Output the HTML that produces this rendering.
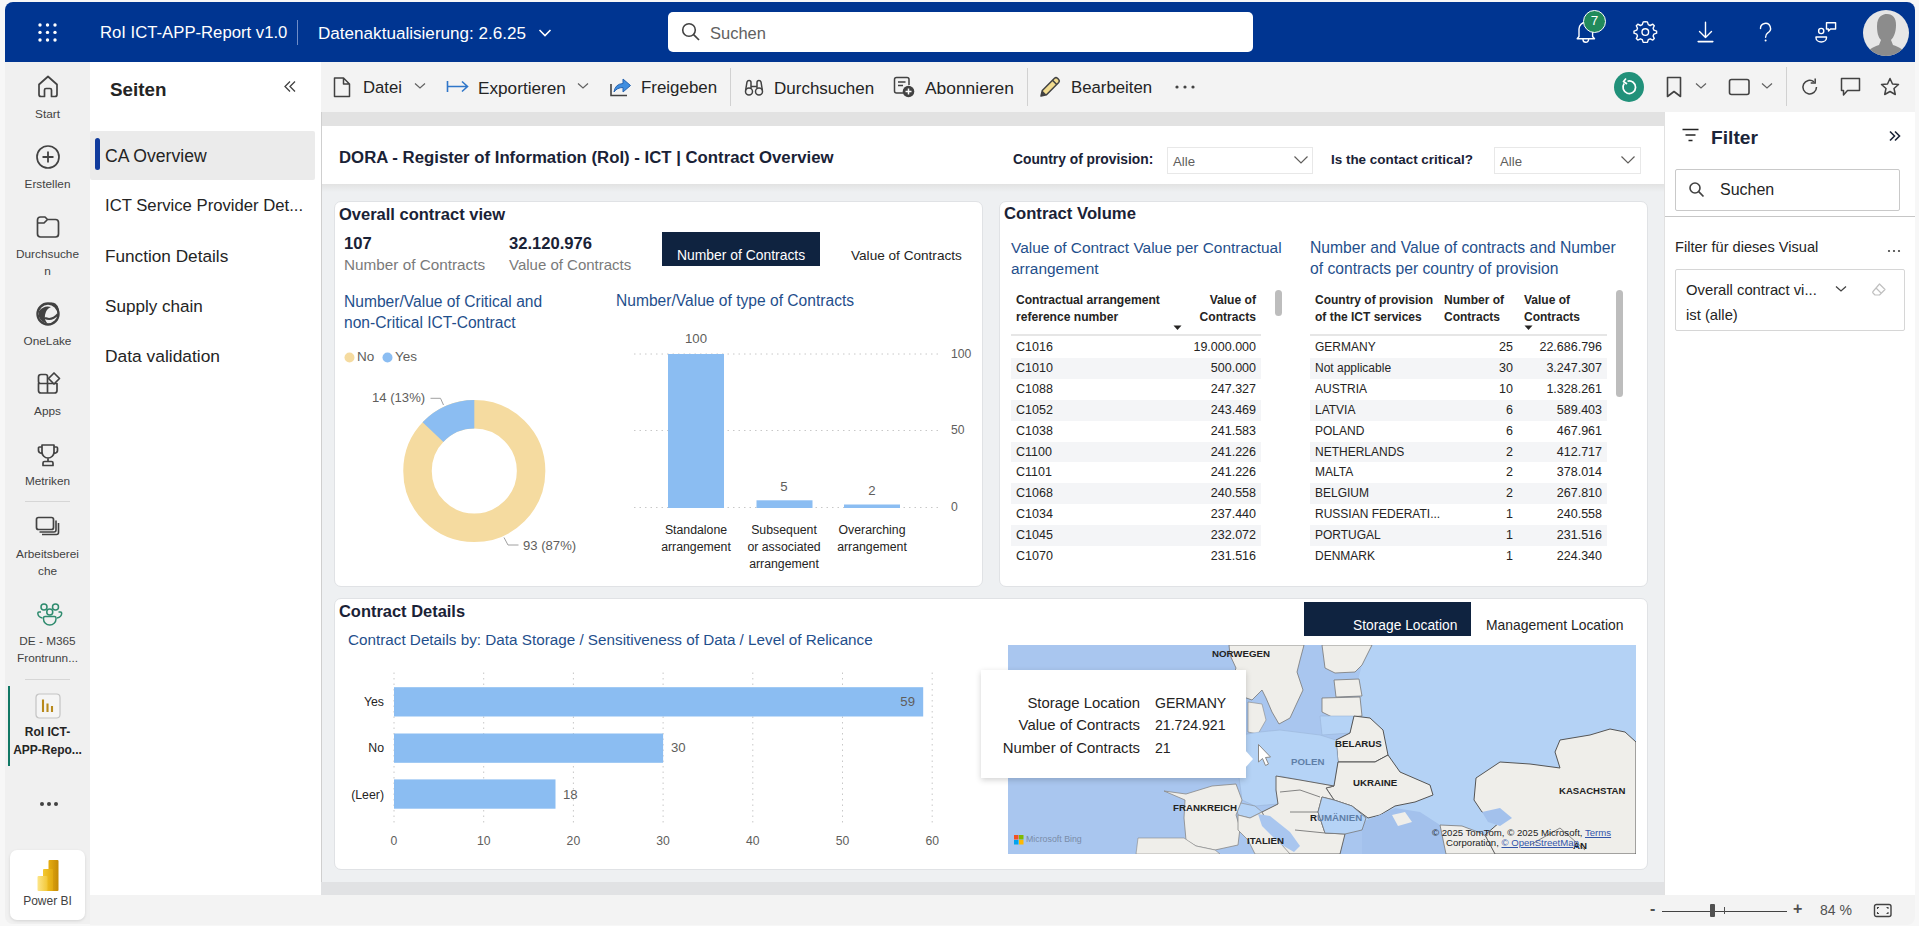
<!DOCTYPE html>
<html><head><meta charset="utf-8">
<style>
*{box-sizing:border-box;margin:0;padding:0}
html,body{width:1919px;height:926px;overflow:hidden;background:#f7f7f7;font-family:"Liberation Sans",sans-serif;color:#242424}
.a{position:absolute;white-space:nowrap}
#top{left:5px;top:2px;width:1910px;height:60px;background:#003591;border-radius:8px 8px 0 0}
#rail{left:5px;top:62px;width:85px;height:862px;background:#f0f0f0;border-radius:0 0 0 8px}
#pages{left:90px;top:62px;width:232px;height:833px;background:#fff;border-right:1px solid #cfcfcf}
#tool{left:321px;top:62px;width:1594px;height:50px;background:#f3f3f3}
#canvas{left:322px;top:112px;width:1342px;height:783px;background:#eef0f2}
#filter{left:1664px;top:112px;width:251px;height:783px;background:#fff;border-left:1px solid #e1e1e1}
#status{left:90px;top:895px;width:1825px;height:30px;background:#f3f3f3;border-radius:0 0 8px 0}
.card{position:absolute;background:#fff;border:1px solid #e0e2e5;border-radius:7px}
.t{position:absolute;white-space:nowrap;line-height:1}
</style></head><body>

<div id="top" class="a"></div>
 <svg class="a" style="left:38px;top:22px" width="30" height="30" viewBox="0 0 30 30" fill="#fff">
  <circle cx="2" cy="3" r="1.7"/><circle cx="9.5" cy="3" r="1.7"/><circle cx="17" cy="3" r="1.7"/>
  <circle cx="2" cy="10.4" r="1.7"/><circle cx="9.5" cy="10.4" r="1.7"/><circle cx="17" cy="10.4" r="1.7"/>
  <circle cx="2" cy="18" r="1.7"/><circle cx="9.5" cy="18" r="1.7"/><circle cx="17" cy="18" r="1.7"/>
 </svg>
 <div class="t" style="left:100px;top:25px;font-size:16.7px;color:#fff">RoI ICT-APP-Report v1.0</div>
 <div class="a" style="left:297px;top:20px;width:1px;height:25px;background:#6f8cc7"></div>
 <div class="t" style="left:318px;top:25px;font-size:17.1px;color:#fff">Datenaktualisierung: 2.6.25</div>
 <svg class="a" style="left:538px;top:28px" width="14" height="10" viewBox="0 0 14 10"><path d="M1.5 2 L7 7.5 L12.5 2" stroke="#fff" stroke-width="1.6" fill="none"/></svg>
 <div class="a" style="left:668px;top:12px;width:585px;height:40px;background:#fff;border-radius:5px"></div>
 <svg class="a" style="left:680px;top:21px" width="22" height="22" viewBox="0 0 22 22"><circle cx="9" cy="9" r="6.3" stroke="#424242" stroke-width="1.6" fill="none"/><path d="M13.6 13.6 L19 19" stroke="#424242" stroke-width="1.7"/></svg>
 <div class="t" style="left:710px;top:25px;font-size:16.5px;color:#616161">Suchen</div>
 <!-- bell -->
 <svg class="a" style="left:1560px;top:2px" width="300" height="60" viewBox="1560 2 300 60">
  <g stroke="#fff" fill="none" stroke-width="1.4" stroke-linejoin="round" stroke-linecap="round">
   <path d="M1579 36.5 L1579 29 A6.8 6.8 0 0 1 1592.6 29 L1592.6 36.5 L1594.5 38.8 L1577.2 38.8 Z"/>
   <path d="M1583 39.5 A2.8 2.8 0 0 0 1588.6 39.5"/>
   <path d="M1645.3 21.8 L1647.4 21.9 L1648.3 24.6 L1650.2 25.5 L1652.8 24.2 L1654.3 25.7 L1653.1 28.3 L1653.9 30.2 L1656.6 31.1 L1656.6 33.2 L1653.9 34.1 L1653.1 36 L1654.3 38.6 L1652.8 40.1 L1650.2 38.8 L1648.3 39.7 L1647.4 42.4 L1643.2 42.4 L1642.3 39.7 L1640.4 38.8 L1637.8 40.1 L1636.3 38.6 L1637.5 36 L1636.7 34.1 L1634 33.2 L1634 31.1 L1636.7 30.2 L1637.5 28.3 L1636.3 25.7 L1637.8 24.2 L1640.4 25.5 L1642.3 24.6 L1643.2 21.9 Z"/>
   <circle cx="1645.3" cy="32.1" r="3.3"/>
   <path d="M1705.5 22.3 L1705.5 37.5 M1699.5 31.5 L1705.5 37.5 L1711.5 31.5"/>
   <path d="M1698.2 41.6 L1712.8 41.6" stroke-width="1.6"/>
   <path d="M1760.5 28.5 A5 5 0 1 1 1767.8 32.8 C1766 34 1765.6 35 1765.6 37.2"/>
   <path d="M1816 37 L1826.5 37 L1826.5 37.8 A5.25 4.2 0 0 1 1816 37.8 Z"/>
   <circle cx="1821.2" cy="31" r="2.6"/>
   <path d="M1826.5 22.8 L1835.6 22.8 L1835.6 29 L1830.5 29 L1828.5 31 L1828.5 29 L1826.5 29 Z"/>
  </g>
  <circle cx="1765.6" cy="40.6" r="1" fill="#fff"/>
 </svg>
 <div class="a" style="left:1583px;top:10px;width:23px;height:23px;border-radius:50%;background:#218a5b;border:1.5px solid #fff;color:#fff;font-size:13.5px;line-height:20px;text-align:center">7</div>
 <!-- avatar -->
 <svg class="a" style="left:1863px;top:10px" width="46" height="46" viewBox="0 0 46 46">
  <defs><clipPath id="av"><circle cx="23" cy="23" r="23"/></clipPath></defs>
  <circle cx="23" cy="23" r="23" fill="#e6e6e6"/>
  <g clip-path="url(#av)" fill="#8c8c8c">
   <path d="M14 16 C14 6 20 4 24 4 C30 4 33 8 33 15 C33 22 31 27 28 30 L30 35 C36 37 42 40 44 46 L2 46 C4 40 10 37 16 35 L18 30 C15 27 14 22 14 16 Z"/>
  </g>
 </svg>
</div>

<div id="rail" class="a"></div>
<div class="a" style="left:5px;top:62px;width:85px;text-align:center;font-size:11.8px;color:#424242;line-height:17px">
 <svg class="a" style="left:31px;top:11px" width="24" height="26" viewBox="0 0 24 26"><path d="M3 11.5 L12 3.5 L21 11.5 L21 21.5 Q21 23.5 19 23.5 L15.5 23.5 L15.5 17 Q15.5 15.5 14 15.5 L10 15.5 Q8.5 15.5 8.5 17 L8.5 23.5 L5 23.5 Q3 23.5 3 21.5 Z" stroke="#424242" stroke-width="1.7" fill="none" stroke-linejoin="round"/></svg>
 <div class="a" style="left:0;top:44px;width:85px">Start</div>
 <svg class="a" style="left:30px;top:82px" width="26" height="26" viewBox="0 0 26 26"><circle cx="13" cy="13" r="11" stroke="#424242" stroke-width="1.7" fill="none"/><path d="M13 7.5 L13 18.5 M7.5 13 L18.5 13" stroke="#424242" stroke-width="1.8"/></svg>
 <div class="a" style="left:0;top:114px;width:85px">Erstellen</div>
 <svg class="a" style="left:30px;top:152px" width="26" height="26" viewBox="0 0 26 26"><path d="M2.5 6 Q2.5 3 5.5 3 L10 3 L12.5 5.5 L20.5 5.5 Q23.5 5.5 23.5 8.5 L23.5 20 Q23.5 23 20.5 23 L5.5 23 Q2.5 23 2.5 20 Z M2.5 9 L9 9 L12.5 5.5" stroke="#424242" stroke-width="1.7" fill="none" stroke-linejoin="round"/></svg>
 <div class="a" style="left:0;top:184px;width:85px;line-height:16.5px">Durchsuche<br>n</div>
 <svg class="a" style="left:30px;top:239px" width="26" height="26" viewBox="0 0 26 26"><circle cx="13" cy="13" r="10.5" stroke="#424242" stroke-width="2.4" fill="none"/><path d="M4 10 Q9 4 16 6 Q11 8 10 14 Q9 19 13 23 Q6 21 4 16 Z" fill="#424242"/><path d="M10 17 Q17 20 23 13" stroke="#424242" stroke-width="2" fill="none"/><path d="M14 3 Q21 1 23 9" stroke="#424242" stroke-width="2.2" fill="none"/></svg>
 <div class="a" style="left:0;top:271px;width:85px">OneLake</div>
 <svg class="a" style="left:31px;top:309px" width="26" height="26" viewBox="0 0 26 26"><path d="M2.5 6 Q2.5 3.5 5 3.5 L9.5 3.5 Q11.5 3.5 11.5 5.5 L11.5 12.5 L4.5 12.5 Q2.5 12.5 2.5 10.5 Z M2.5 12.5 L11.5 12.5 L11.5 22 L5 22 Q2.5 22 2.5 19.5 Z M11.5 12.5 L21 12.5 L21 19.5 Q21 22 18.5 22 L11.5 22 Z" stroke="#424242" stroke-width="1.7" fill="none" stroke-linejoin="round"/><path d="M18 2 L23.5 7.5 L18 13 L12.5 7.5 Z" stroke="#424242" stroke-width="1.7" fill="#f0f0f0" stroke-linejoin="round"/></svg>
 <div class="a" style="left:0;top:341px;width:85px">Apps</div>
 <svg class="a" style="left:31px;top:380px" width="24" height="26" viewBox="0 0 24 26"><path d="M6 3 L18 3 L18 10 A6 6 0 0 1 6 10 Z M6 5 L3.5 5 Q2.5 5 2.5 6 L2.5 8.5 Q2.5 11 6 11.5 M18 5 L20.5 5 Q21.5 5 21.5 6 L21.5 8.5 Q21.5 11 18 11.5 M12 16 L12 19 M7 23.5 L7 21 Q7 19.5 8.5 19.5 L15.5 19.5 Q17 19.5 17 21 L17 23.5 Z" stroke="#424242" stroke-width="1.7" fill="none" stroke-linejoin="round"/></svg>
 <div class="a" style="left:0;top:411px;width:85px">Metriken</div>
 <div class="a" style="left:20px;top:439px;width:45px;height:1px;background:#d6d6d6"></div>
 <svg class="a" style="left:30px;top:454px" width="28" height="22" viewBox="0 0 28 22"><rect x="1.5" y="1.5" width="17" height="12" rx="2" stroke="#424242" stroke-width="1.7" fill="none"/><path d="M21 4.5 L21 14 Q21 16 19 16 L4.5 16" stroke="#424242" stroke-width="1.6" fill="none"/><path d="M23.5 7 L23.5 16.5 Q23.5 18.5 21.5 18.5 L7 18.5" stroke="#424242" stroke-width="1.6" fill="none"/></svg>
 <div class="a" style="left:0;top:484px;width:85px;line-height:17px">Arbeitsberei<br>che</div>
 <svg class="a" style="left:31px;top:540px" width="28" height="26" viewBox="0 0 28 26"><circle cx="8" cy="5" r="3" stroke="#2e8b6e" stroke-width="1.5" fill="none"/><circle cx="19.5" cy="5" r="3" stroke="#2e8b6e" stroke-width="1.5" fill="none"/><circle cx="13.75" cy="10" r="3" stroke="#2e8b6e" stroke-width="1.5" fill="none"/><path d="M5 10 L3 10 Q1.8 10 1.8 11.2 Q2 15 6.5 16" stroke="#2e8b6e" stroke-width="1.5" fill="none"/><path d="M22.5 10 L24.5 10 Q25.7 10 25.7 11.2 Q25.5 15 21 16" stroke="#2e8b6e" stroke-width="1.5" fill="none"/><path d="M7.5 16 Q7.5 14.5 9 14.5 L18.5 14.5 Q20 14.5 20 16 L20 17 A6.25 6 0 0 1 7.5 17 Z" stroke="#2e8b6e" stroke-width="1.5" fill="none" stroke-linejoin="round"/></svg>
 <div class="a" style="left:0;top:571px;width:85px;line-height:17px">DE - M365<br>Frontrunn...</div>
 <div class="a" style="left:20px;top:617px;width:45px;height:1px;background:#d6d6d6"></div>
 <div class="a" style="left:2.5px;top:624px;width:2px;height:80px;background:#117865"></div>
 <svg class="a" style="left:30px;top:631px" width="26" height="26" viewBox="0 0 26 26"><rect x="1" y="1" width="24" height="24" rx="3.5" fill="#f5f5f5" stroke="#c4c4c4" stroke-width="1.2"/><path d="M8 6.5 L8 19 M12.5 10.5 L12.5 19 M17 13 L17 19" stroke="#b8891b" stroke-width="2.1"/></svg>
 <div class="a" style="left:0;top:661px;width:85px;line-height:18px;font-weight:bold;font-size:12px;color:#242424">RoI ICT-<br>APP-Repo...</div>
 <svg class="a" style="left:33px;top:737px" width="22" height="10" viewBox="0 0 22 10"><circle cx="4" cy="5" r="2" fill="#424242"/><circle cx="11" cy="5" r="2" fill="#424242"/><circle cx="18" cy="5" r="2" fill="#424242"/></svg>
 <div class="a" style="left:5px;top:788px;width:75px;height:70px;background:#fff;border-radius:7px;box-shadow:0 1px 3px rgba(0,0,0,0.12)"></div>
 <svg class="a" style="left:31px;top:796px" width="24" height="34" viewBox="0 0 24 34"><defs><linearGradient id="pb1" x1="0" x2="1"><stop offset="0" stop-color="#e6ad10"/><stop offset="1" stop-color="#c48a05"/></linearGradient><linearGradient id="pb2" x1="0" x2="1"><stop offset="0" stop-color="#f3c92f"/><stop offset="1" stop-color="#e2a90e"/></linearGradient><linearGradient id="pb3" x1="0" x2="1"><stop offset="0" stop-color="#fde68a"/><stop offset="1" stop-color="#f2c736"/></linearGradient></defs><rect x="12.5" y="2" width="10" height="31" rx="1" fill="url(#pb1)"/><rect x="7" y="11" width="10" height="22" rx="1" fill="url(#pb2)"/><rect x="1.5" y="18" width="10" height="15" rx="1" fill="url(#pb3)"/></svg>
 <div class="a" style="left:0;top:831px;width:85px;font-size:12px;color:#424242">Power BI</div>
</div>


<div id="pages" class="a"></div>
<div class="t" style="left:110px;top:81px;font-size:18.8px;font-weight:bold;color:#242424">Seiten</div>
<svg class="a" style="left:282px;top:79px" width="16" height="16" viewBox="0 0 16 16"><path d="M8 2.5 L3 7.5 L8 12.5 M13 2.5 L8 7.5 L13 12.5" stroke="#424242" stroke-width="1.3" fill="none"/></svg>
<div class="a" style="left:90px;top:131px;width:225px;height:49px;background:#ebebeb;border-radius:2px"></div>
<div class="a" style="left:95px;top:138px;width:5px;height:32px;background:#0f3a9c;border-radius:3px"></div>
<div class="t" style="left:105px;top:148px;font-size:17.6px;color:#242424">CA Overview</div>
<div class="t" style="left:105px;top:198px;font-size:16.7px;color:#242424">ICT Service Provider Det...</div>
<div class="t" style="left:105px;top:248px;font-size:17.2px;color:#242424">Function Details</div>
<div class="t" style="left:105px;top:298px;font-size:17.1px;color:#242424">Supply chain</div>
<div class="t" style="left:105px;top:348px;font-size:17.4px;color:#242424">Data validation</div>

<div id="tool" class="a"></div>
<!-- Datei -->
<svg class="a" style="left:332px;top:76px" width="20" height="22" viewBox="0 0 20 22"><path d="M2.5 2 L11.5 2 L17.5 8 L17.5 20.5 L2.5 20.5 Z M11.5 2 L11.5 8 L17.5 8" stroke="#424242" stroke-width="1.5" fill="none" stroke-linejoin="round"/></svg>
<div class="t" style="left:363px;top:80px;font-size:16.7px;color:#242424">Datei</div>
<svg class="a" style="left:414px;top:82px" width="12" height="8" viewBox="0 0 12 8"><path d="M1 1.5 L6 6 L11 1.5" stroke="#616161" stroke-width="1.2" fill="none"/></svg>
<!-- Exportieren -->
<svg class="a" style="left:446px;top:78px" width="24" height="18" viewBox="0 0 24 18"><path d="M1.5 3 L1.5 14 M2 8.5 L21.5 8.5 M16 3.5 L21.5 8.5 L16 13.5" stroke="#2f76c9" stroke-width="1.6" fill="none"/></svg>
<div class="t" style="left:478px;top:80px;font-size:17.2px;color:#242424">Exportieren</div>
<svg class="a" style="left:577px;top:82px" width="12" height="8" viewBox="0 0 12 8"><path d="M1 1.5 L6 6 L11 1.5" stroke="#616161" stroke-width="1.2" fill="none"/></svg>
<!-- Freigeben -->
<svg class="a" style="left:609px;top:76px" width="24" height="22" viewBox="0 0 24 22"><path d="M2 8 L2 19.5 L18 19.5" stroke="#424242" stroke-width="1.6" fill="none"/><path d="M5 16 Q6 8 14 7.5 L14 3 L21.5 9.5 L14 16 L14 11.5 Q8 11.5 5 16 Z" fill="#3f8ee0" stroke="#2563b0" stroke-width="1" stroke-linejoin="round"/></svg>
<div class="t" style="left:641px;top:80px;font-size:16.9px;color:#242424">Freigeben</div>
<div class="a" style="left:730px;top:68px;width:1px;height:38px;background:#d1d1d1"></div>
<!-- Durchsuchen -->
<svg class="a" style="left:744px;top:78px" width="20" height="19" viewBox="0 0 20 19"><circle cx="5" cy="13.5" r="3.5" stroke="#424242" stroke-width="1.5" fill="none"/><circle cx="15" cy="13.5" r="3.5" stroke="#424242" stroke-width="1.5" fill="none"/><path d="M1.6 12.5 L3 4 Q3.5 2.5 5 2.5 Q7 2.5 7 4.5 L7 10 M18.4 12.5 L17 4 Q16.5 2.5 15 2.5 Q13 2.5 13 4.5 L13 10 M7 8.5 L13 8.5" stroke="#424242" stroke-width="1.5" fill="none"/></svg>
<div class="t" style="left:774px;top:80px;font-size:17px;color:#242424">Durchsuchen</div>
<!-- Abonnieren -->
<svg class="a" style="left:892px;top:75px" width="24" height="24" viewBox="0 0 24 24"><path d="M11 18 L4.5 18 Q2.5 18 2.5 16 L2.5 4.5 Q2.5 2.5 4.5 2.5 L15 2.5 Q17 2.5 17 4.5 L17 10" stroke="#424242" stroke-width="1.5" fill="none"/><path d="M6 7 L13.5 7 M6 10.5 L11 10.5" stroke="#424242" stroke-width="1.5"/><circle cx="16.5" cy="16.5" r="5.8" fill="#424242"/><path d="M16.5 13.5 L16.5 19.5 M13.5 16.5 L19.5 16.5" stroke="#fff" stroke-width="1.5"/></svg>
<div class="t" style="left:925px;top:80px;font-size:17.4px;color:#242424">Abonnieren</div>
<div class="a" style="left:1027px;top:68px;width:1px;height:38px;background:#d1d1d1"></div>
<!-- Bearbeiten -->
<svg class="a" style="left:1038px;top:75px" width="24" height="24" viewBox="0 0 24 24"><path d="M3 21 L4.3 15.5 L16.5 3.3 Q18 2 19.5 3.3 L20.7 4.5 Q22 6 20.7 7.5 L8.5 19.7 Z" fill="#f2dc8f" stroke="#424242" stroke-width="1.5" stroke-linejoin="round"/><path d="M14.5 5.3 L18.7 9.5" stroke="#424242" stroke-width="1.5"/><path d="M3 21 L4.3 15.5 L8.5 19.7 Z" fill="#424242"/></svg>
<div class="t" style="left:1071px;top:80px;font-size:16.8px;color:#242424">Bearbeiten</div>
<svg class="a" style="left:1174px;top:83px" width="22" height="8" viewBox="0 0 22 8"><circle cx="3" cy="4" r="1.6" fill="#424242"/><circle cx="11" cy="4" r="1.6" fill="#424242"/><circle cx="19" cy="4" r="1.6" fill="#424242"/></svg>
<!-- right side -->
<div class="a" style="left:1614px;top:72px;width:30px;height:30px;border-radius:50%;background:#21917a"></div>
<svg class="a" style="left:1614px;top:72px" width="30" height="30" viewBox="0 0 30 30"><path d="M10.2 11.5 A6.3 6.3 0 1 0 13.5 9.2" stroke="#fff" stroke-width="1.7" fill="none"/><path d="M12 6.5 L9.5 9.5 L13 12" stroke="#fff" stroke-width="1.7" fill="none" stroke-linejoin="round"/></svg>
<svg class="a" style="left:1666px;top:76px" width="16" height="22" viewBox="0 0 16 22"><path d="M1.5 1.5 L14.5 1.5 L14.5 20.5 L8 15.5 L1.5 20.5 Z" stroke="#424242" stroke-width="1.6" fill="none" stroke-linejoin="round"/></svg>
<svg class="a" style="left:1695px;top:82px" width="12" height="8" viewBox="0 0 12 8"><path d="M1 1.5 L6 6 L11 1.5" stroke="#616161" stroke-width="1.2" fill="none"/></svg>
<svg class="a" style="left:1728px;top:78px" width="23" height="18" viewBox="0 0 23 18"><rect x="1.5" y="1.5" width="19.5" height="15" rx="2" stroke="#424242" stroke-width="1.6" fill="none"/></svg>
<svg class="a" style="left:1761px;top:82px" width="12" height="8" viewBox="0 0 12 8"><path d="M1 1.5 L6 6 L11 1.5" stroke="#616161" stroke-width="1.2" fill="none"/></svg>
<div class="a" style="left:1786px;top:67px;width:1px;height:39px;background:#d1d1d1"></div>
<svg class="a" style="left:1800px;top:77px" width="20" height="20" viewBox="0 0 20 20"><path d="M16.5 10 A6.8 6.8 0 1 1 14 4.8" stroke="#424242" stroke-width="1.5" fill="none"/><path d="M15.2 1.5 L15.2 6 L10.7 6" stroke="#424242" stroke-width="1.5" fill="none"/></svg>
<svg class="a" style="left:1840px;top:77px" width="21" height="20" viewBox="0 0 21 20"><path d="M1.5 1.5 L19.5 1.5 L19.5 13.5 L7.5 13.5 L3.5 18 L3.5 13.5 L1.5 13.5 Z" stroke="#424242" stroke-width="1.5" fill="none" stroke-linejoin="round"/></svg>
<svg class="a" style="left:1880px;top:77px" width="20" height="19" viewBox="0 0 20 19"><path d="M10 1.5 L12.5 7 L18.5 7.5 L14 11.5 L15.3 17.5 L10 14.5 L4.7 17.5 L6 11.5 L1.5 7.5 L7.5 7 Z" stroke="#424242" stroke-width="1.5" fill="none" stroke-linejoin="round"/></svg>

<div id="canvas" class="a"></div>
<div class="a" style="left:322px;top:112px;width:1342px;height:14px;background:#e2e2e2"></div>
<div class="a" style="left:322px;top:184px;width:1342px;height:8px;background:linear-gradient(#e2e2e2,#eef0f2)"></div><div class="a" style="left:322px;top:126px;width:1342px;height:58px;background:#fff"></div>

<!-- HEADER -->
<div class="t" style="left:339px;top:150px;font-size:16.75px;font-weight:bold;color:#1a2236">DORA - Register of Information (RoI) - ICT | Contract Overview</div>
<div class="t" style="left:1013px;top:153px;font-size:13.8px;font-weight:bold;color:#1a2236">Country of provision:</div>
<div class="a" style="left:1167px;top:147px;width:146px;height:27px;border:1px solid #e8e8e8;background:#fff"></div>
<div class="t" style="left:1173px;top:155px;font-size:13.2px;color:#605e5c">Alle</div>
<svg class="a" style="left:1293px;top:154px" width="16" height="12" viewBox="0 0 16 12"><path d="M1.5 2.5 L8 9 L14.5 2.5" stroke="#605e5c" stroke-width="1.2" fill="none"/></svg>
<div class="t" style="left:1331px;top:153px;font-size:13.45px;font-weight:bold;color:#1a2236">Is the contact critical?</div>
<div class="a" style="left:1494px;top:147px;width:147px;height:27px;border:1px solid #e8e8e8;background:#fff"></div>
<div class="t" style="left:1500px;top:155px;font-size:13.2px;color:#605e5c">Alle</div>
<svg class="a" style="left:1620px;top:154px" width="16" height="12" viewBox="0 0 16 12"><path d="M1.5 2.5 L8 9 L14.5 2.5" stroke="#605e5c" stroke-width="1.2" fill="none"/></svg>

<!-- CARD 1 -->
<div class="card" style="left:334px;top:201px;width:649px;height:386px"></div>
<div class="t" style="left:339px;top:206px;font-size:16.5px;font-weight:bold;color:#1a2236">Overall contract view</div>
<div class="t" style="left:344px;top:236px;font-size:16.6px;font-weight:bold;color:#1a2236">107</div>
<div class="t" style="left:344px;top:257px;font-size:15.3px;color:#7a7a7a">Number of Contracts</div>
<div class="t" style="left:509px;top:236px;font-size:16.6px;font-weight:bold;color:#1a2236">32.120.976</div>
<div class="t" style="left:509px;top:257px;font-size:15px;color:#7a7a7a">Value of Contracts</div>
<div class="a" style="left:662px;top:232px;width:158px;height:34px;background:#0f2340"></div>
<div class="t" style="left:677px;top:249px;font-size:13.9px;color:#fff">Number of Contracts</div>
<div class="t" style="left:851px;top:249px;font-size:13.6px;color:#252423">Value of Contracts</div>
<div class="t" style="left:344px;top:291px;font-size:15.6px;color:#1f4f8c;line-height:21px">Number/Value of Critical and<br>non-Critical ICT-Contract</div>
<svg class="a" style="left:343px;top:351px" width="14" height="14"><circle cx="6.5" cy="6.5" r="5" fill="#f5dba0"/></svg>
<div class="t" style="left:357px;top:350px;font-size:13.5px;color:#605e5c">No</div>
<svg class="a" style="left:381px;top:351px" width="14" height="14"><circle cx="6.5" cy="6.5" r="5" fill="#8bbdf2"/></svg>
<div class="t" style="left:395px;top:350px;font-size:13.5px;color:#605e5c">Yes</div>
<svg class="a" style="left:334px;top:380px" width="260" height="180" viewBox="334 380 260 180">
 <circle cx="474.3" cy="471" r="56.8" stroke="#f5dba0" stroke-width="28.5" fill="none"/>
 <path d="M474.3 400 A71 71 0 0 0 422.6 422.3 L443.4 441.9 A42.5 42.5 0 0 1 474.3 428.5 Z" fill="#8bbdf2"/>
 <path d="M430.5 398.3 L440.5 398.3 L443.5 405" stroke="#a0a0a0" stroke-width="1" fill="none"/>
 <path d="M504 537.5 L508 545 L518.5 545" stroke="#a0a0a0" stroke-width="1" fill="none"/>
</svg>
<div class="t" style="left:372px;top:391px;font-size:13.1px;color:#605e5c">14 (13%)</div>
<div class="t" style="left:523px;top:539px;font-size:13.1px;color:#605e5c">93 (87%)</div>
<div class="t" style="left:616px;top:293px;font-size:15.6px;color:#1f4f8c">Number/Value of type of Contracts</div>
<svg class="a" style="left:630px;top:340px" width="350" height="180" viewBox="630 340 350 180">
 <g stroke="#c8c8c8" stroke-width="1" stroke-dasharray="1.5 4">
  <path d="M634 354 L942 354"/><path d="M634 430.5 L942 430.5"/><path d="M634 507.5 L942 507.5"/>
 </g>
 <rect x="668" y="354" width="56" height="154" fill="#8bbdf2"/>
 <rect x="756.5" y="500.3" width="56" height="7.7" fill="#8bbdf2"/>
 <rect x="844" y="504.5" width="56" height="3.5" fill="#8bbdf2"/>
</svg>
<div class="t" style="left:951px;top:348px;font-size:12.2px;color:#605e5c">100</div>
<div class="t" style="left:951px;top:424px;font-size:12.2px;color:#605e5c">50</div>
<div class="t" style="left:951px;top:501px;font-size:12.2px;color:#605e5c">0</div>
<div class="t" style="left:646px;top:332px;width:100px;text-align:center;font-size:13.2px;color:#605e5c">100</div>
<div class="t" style="left:734px;top:480px;width:100px;text-align:center;font-size:13.2px;color:#605e5c">5</div>
<div class="t" style="left:822px;top:484px;width:100px;text-align:center;font-size:13.2px;color:#605e5c">2</div>
<div class="t" style="left:646px;top:522px;width:100px;text-align:center;font-size:12.3px;line-height:17px;color:#252423">Standalone<br>arrangement</div>
<div class="t" style="left:734px;top:522px;width:100px;text-align:center;font-size:12.3px;line-height:17px;color:#252423">Subsequent<br>or associated<br>arrangement</div>
<div class="t" style="left:822px;top:522px;width:100px;text-align:center;font-size:12.3px;line-height:17px;color:#252423">Overarching<br>arrangement</div>

<!-- CARD 2 -->
<div class="card" style="left:999px;top:201px;width:649px;height:386px"></div>
<div class="t" style="left:1004px;top:206px;font-size:16.65px;font-weight:bold;color:#1a2236">Contract Volume</div>
<div class="t" style="left:1011px;top:237px;font-size:15.45px;color:#1f4f8c;line-height:21px">Value of Contract Value per Contractual<br>arrangement</div>
<div class="t" style="left:1310px;top:237px;font-size:15.7px;color:#1f4f8c;line-height:21px">Number and Value of contracts and Number<br>of contracts per country of provision</div>
<div class="t" style="left:1016px;top:292px;font-size:12.1px;font-weight:bold;color:#252423;line-height:17px">Contractual arrangement<br>reference number</div>
<div class="t" style="left:1155px;top:292px;width:101px;text-align:right;font-size:12.1px;font-weight:bold;color:#252423;line-height:17px">Value of<br>Contracts</div>
<svg class="a" style="left:1173px;top:325px" width="9" height="6"><path d="M0.5 0.5 L8.5 0.5 L4.5 5 Z" fill="#252423"/></svg>
<div class="a" style="left:1011px;top:334px;width:250px;height:2px;background:#e6e6e6"></div>
<div class="a" style="left:1275px;top:290px;width:7px;height:26px;background:#bdbdbd;border-radius:4px"></div>
<div class="t" style="left:1315px;top:292px;font-size:12px;font-weight:bold;color:#252423;line-height:17px">Country of provision<br>of the ICT services</div>
<div class="t" style="left:1444px;top:292px;font-size:12px;font-weight:bold;color:#252423;line-height:17px">Number of<br>Contracts</div>
<div class="t" style="left:1524px;top:292px;font-size:12px;font-weight:bold;color:#252423;line-height:17px">Value of<br>Contracts</div>
<svg class="a" style="left:1524px;top:325px" width="9" height="6"><path d="M0.5 0.5 L8.5 0.5 L4.5 5 Z" fill="#252423"/></svg>
<div class="a" style="left:1310px;top:334px;width:297px;height:2px;background:#e6e6e6"></div>
<div class="a" style="left:1616px;top:290px;width:7px;height:107px;background:#bdbdbd;border-radius:4px"></div>
<div class="a" style="left:1011px;top:357.9px;width:250px;height:20.9px;background:#f4f5f7"></div>
<div class="a" style="left:1310px;top:357.9px;width:297px;height:20.9px;background:#f4f5f7"></div>
<div class="a" style="left:1011px;top:399.7px;width:250px;height:20.9px;background:#f4f5f7"></div>
<div class="a" style="left:1310px;top:399.7px;width:297px;height:20.9px;background:#f4f5f7"></div>
<div class="a" style="left:1011px;top:441.5px;width:250px;height:20.9px;background:#f4f5f7"></div>
<div class="a" style="left:1310px;top:441.5px;width:297px;height:20.9px;background:#f4f5f7"></div>
<div class="a" style="left:1011px;top:483.3px;width:250px;height:20.9px;background:#f4f5f7"></div>
<div class="a" style="left:1310px;top:483.3px;width:297px;height:20.9px;background:#f4f5f7"></div>
<div class="a" style="left:1011px;top:525.1px;width:250px;height:20.9px;background:#f4f5f7"></div>
<div class="a" style="left:1310px;top:525.1px;width:297px;height:20.9px;background:#f4f5f7"></div>
<div class="t" style="left:1016px;top:341.0px;font-size:12.5px;color:#252423">C1016</div>
<div class="t" style="left:1156px;top:341.0px;width:100px;text-align:right;font-size:12.5px;color:#252423">19.000.000</div>
<div class="t" style="left:1016px;top:361.9px;font-size:12.5px;color:#252423">C1010</div>
<div class="t" style="left:1156px;top:361.9px;width:100px;text-align:right;font-size:12.5px;color:#252423">500.000</div>
<div class="t" style="left:1016px;top:382.8px;font-size:12.5px;color:#252423">C1088</div>
<div class="t" style="left:1156px;top:382.8px;width:100px;text-align:right;font-size:12.5px;color:#252423">247.327</div>
<div class="t" style="left:1016px;top:403.7px;font-size:12.5px;color:#252423">C1052</div>
<div class="t" style="left:1156px;top:403.7px;width:100px;text-align:right;font-size:12.5px;color:#252423">243.469</div>
<div class="t" style="left:1016px;top:424.6px;font-size:12.5px;color:#252423">C1038</div>
<div class="t" style="left:1156px;top:424.6px;width:100px;text-align:right;font-size:12.5px;color:#252423">241.583</div>
<div class="t" style="left:1016px;top:445.5px;font-size:12.5px;color:#252423">C1100</div>
<div class="t" style="left:1156px;top:445.5px;width:100px;text-align:right;font-size:12.5px;color:#252423">241.226</div>
<div class="t" style="left:1016px;top:466.4px;font-size:12.5px;color:#252423">C1101</div>
<div class="t" style="left:1156px;top:466.4px;width:100px;text-align:right;font-size:12.5px;color:#252423">241.226</div>
<div class="t" style="left:1016px;top:487.3px;font-size:12.5px;color:#252423">C1068</div>
<div class="t" style="left:1156px;top:487.3px;width:100px;text-align:right;font-size:12.5px;color:#252423">240.558</div>
<div class="t" style="left:1016px;top:508.2px;font-size:12.5px;color:#252423">C1034</div>
<div class="t" style="left:1156px;top:508.2px;width:100px;text-align:right;font-size:12.5px;color:#252423">237.440</div>
<div class="t" style="left:1016px;top:529.1px;font-size:12.5px;color:#252423">C1045</div>
<div class="t" style="left:1156px;top:529.1px;width:100px;text-align:right;font-size:12.5px;color:#252423">232.072</div>
<div class="t" style="left:1016px;top:550.0px;font-size:12.5px;color:#252423">C1070</div>
<div class="t" style="left:1156px;top:550.0px;width:100px;text-align:right;font-size:12.5px;color:#252423">231.516</div>
<div class="t" style="left:1315px;top:341.0px;font-size:12px;color:#252423">GERMANY</div>
<div class="t" style="left:1463px;top:341.0px;width:50px;text-align:right;font-size:12.5px;color:#252423">25</div>
<div class="t" style="left:1502px;top:341.0px;width:100px;text-align:right;font-size:12.5px;color:#252423">22.686.796</div>
<div class="t" style="left:1315px;top:361.9px;font-size:12px;color:#252423">Not applicable</div>
<div class="t" style="left:1463px;top:361.9px;width:50px;text-align:right;font-size:12.5px;color:#252423">30</div>
<div class="t" style="left:1502px;top:361.9px;width:100px;text-align:right;font-size:12.5px;color:#252423">3.247.307</div>
<div class="t" style="left:1315px;top:382.8px;font-size:12px;color:#252423">AUSTRIA</div>
<div class="t" style="left:1463px;top:382.8px;width:50px;text-align:right;font-size:12.5px;color:#252423">10</div>
<div class="t" style="left:1502px;top:382.8px;width:100px;text-align:right;font-size:12.5px;color:#252423">1.328.261</div>
<div class="t" style="left:1315px;top:403.7px;font-size:12px;color:#252423">LATVIA</div>
<div class="t" style="left:1463px;top:403.7px;width:50px;text-align:right;font-size:12.5px;color:#252423">6</div>
<div class="t" style="left:1502px;top:403.7px;width:100px;text-align:right;font-size:12.5px;color:#252423">589.403</div>
<div class="t" style="left:1315px;top:424.6px;font-size:12px;color:#252423">POLAND</div>
<div class="t" style="left:1463px;top:424.6px;width:50px;text-align:right;font-size:12.5px;color:#252423">6</div>
<div class="t" style="left:1502px;top:424.6px;width:100px;text-align:right;font-size:12.5px;color:#252423">467.961</div>
<div class="t" style="left:1315px;top:445.5px;font-size:12px;color:#252423">NETHERLANDS</div>
<div class="t" style="left:1463px;top:445.5px;width:50px;text-align:right;font-size:12.5px;color:#252423">2</div>
<div class="t" style="left:1502px;top:445.5px;width:100px;text-align:right;font-size:12.5px;color:#252423">412.717</div>
<div class="t" style="left:1315px;top:466.4px;font-size:12px;color:#252423">MALTA</div>
<div class="t" style="left:1463px;top:466.4px;width:50px;text-align:right;font-size:12.5px;color:#252423">2</div>
<div class="t" style="left:1502px;top:466.4px;width:100px;text-align:right;font-size:12.5px;color:#252423">378.014</div>
<div class="t" style="left:1315px;top:487.3px;font-size:12px;color:#252423">BELGIUM</div>
<div class="t" style="left:1463px;top:487.3px;width:50px;text-align:right;font-size:12.5px;color:#252423">2</div>
<div class="t" style="left:1502px;top:487.3px;width:100px;text-align:right;font-size:12.5px;color:#252423">267.810</div>
<div class="t" style="left:1315px;top:508.2px;font-size:12px;color:#252423">RUSSIAN FEDERATI...</div>
<div class="t" style="left:1463px;top:508.2px;width:50px;text-align:right;font-size:12.5px;color:#252423">1</div>
<div class="t" style="left:1502px;top:508.2px;width:100px;text-align:right;font-size:12.5px;color:#252423">240.558</div>
<div class="t" style="left:1315px;top:529.1px;font-size:12px;color:#252423">PORTUGAL</div>
<div class="t" style="left:1463px;top:529.1px;width:50px;text-align:right;font-size:12.5px;color:#252423">1</div>
<div class="t" style="left:1502px;top:529.1px;width:100px;text-align:right;font-size:12.5px;color:#252423">231.516</div>
<div class="t" style="left:1315px;top:550.0px;font-size:12px;color:#252423">DENMARK</div>
<div class="t" style="left:1463px;top:550.0px;width:50px;text-align:right;font-size:12.5px;color:#252423">1</div>
<div class="t" style="left:1502px;top:550.0px;width:100px;text-align:right;font-size:12.5px;color:#252423">224.340</div>
<!-- CARD 3 -->
<div class="card" style="left:334px;top:598px;width:1314px;height:272px"></div>
<div class="t" style="left:339px;top:603px;font-size:16.45px;font-weight:bold;color:#1a2236">Contract Details</div>
<div class="t" style="left:348px;top:632px;font-size:15.25px;color:#1f4f8c">Contract Details by: Data Storage / Sensitiveness of Data / Level of Relicance</div>
<svg class="a" style="left:380px;top:665px" width="570" height="165" viewBox="380 665 570 165">
 <g stroke="#c8c8c8" stroke-width="1" stroke-dasharray="1.5 4">
  <path d="M394 672.5 L394 823"/><path d="M483.7 672.5 L483.7 823"/><path d="M573.4 672.5 L573.4 823"/><path d="M663.1 672.5 L663.1 823"/><path d="M752.8 672.5 L752.8 823"/><path d="M842.5 672.5 L842.5 823"/><path d="M932.2 672.5 L932.2 823"/>
 </g>
 <rect x="394" y="687.2" width="529.2" height="29.3" fill="#8bbdf2"/>
 <rect x="394" y="733.5" width="269.1" height="29.3" fill="#8bbdf2"/>
 <rect x="394" y="779.4" width="161.5" height="29.3" fill="#8bbdf2"/>
</svg>
<div class="t" style="left:300px;top:696px;width:84px;text-align:right;font-size:12.3px;color:#252423">Yes</div>
<div class="t" style="left:300px;top:742px;width:84px;text-align:right;font-size:12.3px;color:#252423">No</div>
<div class="t" style="left:300px;top:789px;width:84px;text-align:right;font-size:12.3px;color:#252423">(Leer)</div>
<div class="t" style="left:880px;top:695px;width:35px;text-align:right;font-size:13.2px;color:#605e5c">59</div>
<div class="t" style="left:671px;top:741px;font-size:13.2px;color:#605e5c">30</div>
<div class="t" style="left:563px;top:788px;font-size:13.2px;color:#605e5c">18</div>
<div class="t" style="left:369px;top:835px;width:50px;text-align:center;font-size:12.2px;color:#605e5c">0</div>
<div class="t" style="left:458.7px;top:835px;width:50px;text-align:center;font-size:12.2px;color:#605e5c">10</div>
<div class="t" style="left:548.4px;top:835px;width:50px;text-align:center;font-size:12.2px;color:#605e5c">20</div>
<div class="t" style="left:638.1px;top:835px;width:50px;text-align:center;font-size:12.2px;color:#605e5c">30</div>
<div class="t" style="left:727.8px;top:835px;width:50px;text-align:center;font-size:12.2px;color:#605e5c">40</div>
<div class="t" style="left:817.5px;top:835px;width:50px;text-align:center;font-size:12.2px;color:#605e5c">50</div>
<div class="t" style="left:907.2px;top:835px;width:50px;text-align:center;font-size:12.2px;color:#605e5c">60</div>

<div class="a" style="left:1304px;top:602px;width:167px;height:34px;background:#0f2340"></div>
<div class="t" style="left:1353px;top:619px;font-size:13.8px;color:#fff">Storage Location</div>
<div class="t" style="left:1486px;top:619px;font-size:13.9px;color:#252423">Management Location</div>

<!-- MAP -->
<svg class="a" style="left:1008px;top:645px" width="628" height="209" viewBox="1008 645 628 209">
 <defs><clipPath id="mc"><rect x="1008" y="645" width="628" height="209"/></clipPath></defs>
 <g clip-path="url(#mc)" stroke-linejoin="round">
 <rect x="1008" y="645" width="628" height="209" fill="#a9c6ef"/>
 <!-- Russia data blue -->
 <path d="M1372 645 L1636 645 L1636 854 L1362 854 L1362 715 L1358 680 L1362 665 Z" fill="#b4d2f5"/>
 <!-- Norway + Sweden -->
 <path d="M1229 645 L1304 645 L1300 660 L1297 672 L1303 690 L1296 705 L1290 718 L1279 724 L1272 712 L1266 698 L1262 690 L1252 700 L1238 695 L1232 680 L1236 668 L1230 655 Z" fill="#efeeea" stroke="#777" stroke-width="0.8"/>
 <!-- Finland -->
 <path d="M1322 645 L1372 645 L1362 665 L1355 672 L1335 673 L1325 668 Z" fill="#efeeea" stroke="#777" stroke-width="0.8"/>
 <!-- Estonia -->
 <path d="M1334 680 L1359 679 L1362 696 L1336 697 Z" fill="#efeeea" stroke="#777" stroke-width="0.8"/>
 <!-- Lithuania -->
 <path d="M1322 698 L1360 697 L1362 716 L1334 718 L1322 712 Z" fill="#efeeea" stroke="#777" stroke-width="0.8"/>
 <!-- Latvia data -->
 <path d="M1320 716 L1354 716 L1350 733 L1322 735 Z" fill="#b5d3f6" stroke="#9ab5d8" stroke-width="0.6"/>
 <!-- Belarus -->
 <path d="M1354 716 L1370 718 L1383 730 L1388 755 L1375 762 L1338 762 L1336 740 L1350 733 Z" fill="#efeeea" stroke="#555" stroke-width="1"/>
 <!-- Denmark -->
 <path d="M1248 702 L1262 704 L1266 720 L1258 734 L1248 732 Z" fill="#efeeea" stroke="#888" stroke-width="0.6"/>
 <!-- Germany + Poland data -->
 <path d="M1241 735 L1260 732 L1280 730 L1320 735 L1336 740 L1338 762 L1334 786 L1300 780 L1280 776 L1276 790 L1278 804 L1255 806 L1242 800 L1238 770 Z" fill="#b5d3f6" stroke="#9ab5d8" stroke-width="0.6"/>
 <!-- Ukraine -->
 <path d="M1338 762 L1375 762 L1388 755 L1400 772 L1430 785 L1433 795 L1415 802 L1395 806 L1380 815 L1368 818 L1352 806 L1334 800 L1326 788 L1334 786 Z" fill="#efeeea" stroke="#555" stroke-width="1"/>
 <!-- Black sea -->
 <path d="M1362 822 L1380 815 L1395 808 L1420 812 L1440 825 L1446 854 L1362 854 Z" fill="#a3c1ec"/>
 <!-- Caucasus -->
 <path d="M1440 825 L1462 826 L1478 832 L1498 842 L1505 854 L1446 854 Z" fill="#efeeea" stroke="#777" stroke-width="0.8"/>
 <!-- Crimea -->
 <path d="M1392 815 L1405 812 L1412 822 L1398 826 Z" fill="#efeeea"/>
 <!-- Central Europe land -->
 <path d="M1276 776 L1300 780 L1334 786 L1326 788 L1334 800 L1322 797 L1318 812 L1325 833 L1345 834 L1340 854 L1282 854 L1270 830 L1262 812 L1278 804 L1276 790 Z" fill="#efeeea" stroke="#666" stroke-width="1"/>
 <path d="M1280 792 L1300 790 L1320 797 M1290 812 L1318 812 M1295 830 L1325 833" stroke="#777" stroke-width="0.9" fill="none"/>
 <!-- Romania data -->
 <path d="M1322 797 L1334 800 L1352 806 L1366 818 L1362 830 L1345 834 L1325 833 L1318 812 Z" fill="#b5d3f6" stroke="#777" stroke-width="0.8"/>
 <!-- Switzerland/Austria data -->
 <path d="M1236 802 L1255 806 L1262 812 L1250 818 L1238 815 Z" fill="#b5d3f6" stroke="#888" stroke-width="0.6"/>
 <!-- France -->
 <path d="M1164 791 L1186 794 L1212 786 L1236 784 L1242 800 L1236 815 L1240 828 L1238 845 L1215 850 L1196 846 L1186 840 L1184 818 L1185 800 Z" fill="#efeeea" stroke="#888" stroke-width="0.8"/>
 <!-- Spain -->
 <path d="M1138 838 L1184 838 L1196 846 L1215 850 L1220 854 L1136 854 Z" fill="#efeeea" stroke="#888" stroke-width="0.6"/>
 <!-- Italy -->
 <path d="M1238 815 L1250 818 L1262 812 L1270 830 L1282 845 L1290 854 L1255 854 L1248 840 L1238 830 Z" fill="#efeeea" stroke="#888" stroke-width="0.8"/>
 <!-- Adriatic -->
 <path d="M1258 814 L1270 816 L1290 832 L1300 846 L1294 852 L1280 844 L1262 826 Z" fill="#a9c6ef"/>
 <!-- Kazakhstan etc -->
 <path d="M1476 778 L1500 762 L1530 764 L1560 768 L1555 752 L1560 740 L1590 735 L1610 729 L1625 732 L1636 742 L1636 854 L1495 854 L1485 835 L1500 822 L1482 812 L1474 800 Z" fill="#efeeea" stroke="#555" stroke-width="1"/>
 <!-- Caspian -->
 <path d="M1482 812 L1500 808 L1512 818 L1500 826 L1488 822 Z" fill="#a3c1ec"/>
 <path d="M1530 845 L1560 828 L1585 850" stroke="#777" stroke-width="0.9" fill="none"/>
 </g>
</svg>
<div class="t" style="left:1212px;top:649px;font-size:9.7px;font-weight:bold;color:#222">NORWEGEN</div>
<div class="t" style="left:1335px;top:739px;font-size:9.7px;font-weight:bold;color:#222">BELARUS</div>
<div class="t" style="left:1291px;top:757px;font-size:9.7px;font-weight:bold;color:#5f7fa8">POLEN</div>
<div class="t" style="left:1353px;top:778px;font-size:9.7px;font-weight:bold;color:#222">UKRAINE</div>
<div class="t" style="left:1559px;top:786px;font-size:9.6px;font-weight:bold;color:#222">KASACHSTAN</div>
<div class="t" style="left:1173px;top:803px;font-size:9.7px;font-weight:bold;color:#222">FRANKREICH</div>
<div class="t" style="left:1310px;top:813px;font-size:9.7px;font-weight:bold;color:#5f7fa8"><span style="color:#222">R</span>UMÄNIEN</div>
<div class="t" style="left:1247px;top:836px;font-size:9.7px;font-weight:bold;color:#222">ITALIEN</div>
<div class="t" style="left:1573px;top:841px;font-size:9.7px;font-weight:bold;color:#222">AN</div>
<svg class="a" style="left:1014px;top:835px" width="10" height="10"><rect x="0" y="0" width="4.5" height="4.5" fill="#f25022"/><rect x="5" y="0" width="4.5" height="4.5" fill="#7fba00"/><rect x="0" y="5" width="4.5" height="4.5" fill="#00a4ef"/><rect x="5" y="5" width="4.5" height="4.5" fill="#ffb900"/></svg>
<div class="t" style="left:1026px;top:835px;font-size:8.8px;color:#7a8ca8">Microsoft Bing</div>
<div class="t" style="left:1432px;top:828px;font-size:9.6px;color:#222">© 2025 TomTom, © 2025 Microsoft, <u style="color:#3355aa">Terms</u></div>
<div class="t" style="left:1446px;top:838px;font-size:9.6px;color:#222">Corporation, <u style="color:#3355aa">© OpenStreetMap</u></div>

<!-- tooltip -->
<div class="a" style="left:981px;top:670px;width:265px;height:108px;background:#fff;box-shadow:0 2px 6px rgba(0,0,0,0.18)"></div>
<svg class="a" style="left:1245px;top:750px" width="9" height="18"><path d="M0 0 L8 9 L0 18 Z" fill="#fff"/></svg>
<div class="t" style="left:980px;top:692px;width:160px;text-align:right;font-size:14.9px;line-height:22.4px;color:#252423">Storage Location<br>Value of Contracts<br>Number of Contracts</div>
<div class="t" style="left:1155px;top:692px;font-size:14.1px;line-height:22.4px;color:#252423">GERMANY<br>21.724.921<br>21</div>
<svg class="a" style="left:1257px;top:743px" width="16" height="26" viewBox="0 0 16 26"><path d="M1.5 1.5 L1.5 19 L5.5 15.5 L8.5 22.5 L11.5 21 L8.5 14.5 L13.5 14 Z" fill="#fff" stroke="#888" stroke-width="1" stroke-linejoin="round"/></svg>
<!-- bottom gray band -->
<div class="a" style="left:321px;top:882px;width:1343px;height:13px;background:#e1e2e4"></div>

<div id="filter" class="a"></div>
<svg class="a" style="left:1681px;top:127px" width="20" height="17" viewBox="0 0 20 17"><path d="M1.5 2.5 L17.5 2.5 M4.5 8 L14.5 8 M7.5 13.5 L11.5 13.5" stroke="#242424" stroke-width="1.7"/></svg>
<div class="t" style="left:1711px;top:128px;font-size:19.2px;font-weight:bold;color:#1b2539">Filter</div>
<svg class="a" style="left:1886px;top:129px" width="16" height="14" viewBox="0 0 16 14"><path d="M4 2.5 L8.5 7 L4 11.5 M9 2.5 L13.5 7 L9 11.5" stroke="#1b2539" stroke-width="1.6" fill="none"/></svg>
<div class="a" style="left:1675px;top:169px;width:225px;height:42px;border:1px solid #c9c9c9;border-radius:2px;background:#fff"></div>
<svg class="a" style="left:1688px;top:181px" width="18" height="18" viewBox="0 0 18 18"><circle cx="7" cy="7" r="5" stroke="#424242" stroke-width="1.6" fill="none"/><path d="M10.7 10.7 L15.5 15.5" stroke="#424242" stroke-width="1.7"/></svg>
<div class="t" style="left:1720px;top:182px;font-size:16px;color:#242424">Suchen</div>
<div class="a" style="left:1665px;top:216px;width:250px;height:1px;background:#c6c6c6"></div>
<div class="t" style="left:1675px;top:240px;font-size:14.6px;color:#242424">Filter für dieses Visual</div>
<svg class="a" style="left:1886px;top:248px" width="16" height="6" viewBox="0 0 16 6"><circle cx="3" cy="3" r="1.1" fill="#424242"/><circle cx="8" cy="3" r="1.1" fill="#424242"/><circle cx="13" cy="3" r="1.1" fill="#424242"/></svg>
<div class="a" style="left:1675px;top:269px;width:230px;height:62px;border:1px solid #d6d6d6;border-radius:2px;background:#fff"></div>
<div class="t" style="left:1686px;top:283px;font-size:14.8px;color:#242424">Overall contract vi...</div>
<svg class="a" style="left:1835px;top:285px" width="12" height="8" viewBox="0 0 12 8"><path d="M1 1.5 L6 6 L11 1.5" stroke="#424242" stroke-width="1.3" fill="none"/></svg>
<svg class="a" style="left:1871px;top:282px" width="16" height="16" viewBox="0 0 16 16"><path d="M8.5 2 L14 7.5 L8.5 13 L4 13 L2 11 Q1.3 10.3 2 9.5 Z M5 6 L10.5 11.5" stroke="#c0c0c0" stroke-width="1.2" fill="none" stroke-linejoin="round"/></svg>
<div class="t" style="left:1686px;top:308px;font-size:14.8px;color:#242424">ist (alle)</div>

<div id="status" class="a"></div>
<div class="t" style="left:1650px;top:901px;font-size:16px;font-weight:bold;color:#505050">-</div>
<div class="a" style="left:1662px;top:911px;width:125px;height:1px;background:#424242"></div>
<div class="a" style="left:1710px;top:904px;width:5px;height:13px;background:#505050;border-radius:1px"></div>
<div class="a" style="left:1724px;top:907px;width:1px;height:7px;background:#505050"></div>
<div class="t" style="left:1793px;top:901px;font-size:16px;font-weight:bold;color:#505050">+</div>
<div class="t" style="left:1820px;top:903px;font-size:14px;color:#505050">84 %</div>
<svg class="a" style="left:1873px;top:903px" width="20" height="15" viewBox="0 0 20 15"><rect x="1.5" y="1.5" width="16.5" height="12" rx="2" stroke="#424242" stroke-width="1.4" fill="none"/><path d="M4.5 6 L4.5 4.5 L6 4.5 M13.5 4.5 L15 4.5 L15 6 M15 9 L15 10.5 L13.5 10.5 M6 10.5 L4.5 10.5 L4.5 9" stroke="#424242" stroke-width="1.1" fill="none"/></svg>

</body></html>
